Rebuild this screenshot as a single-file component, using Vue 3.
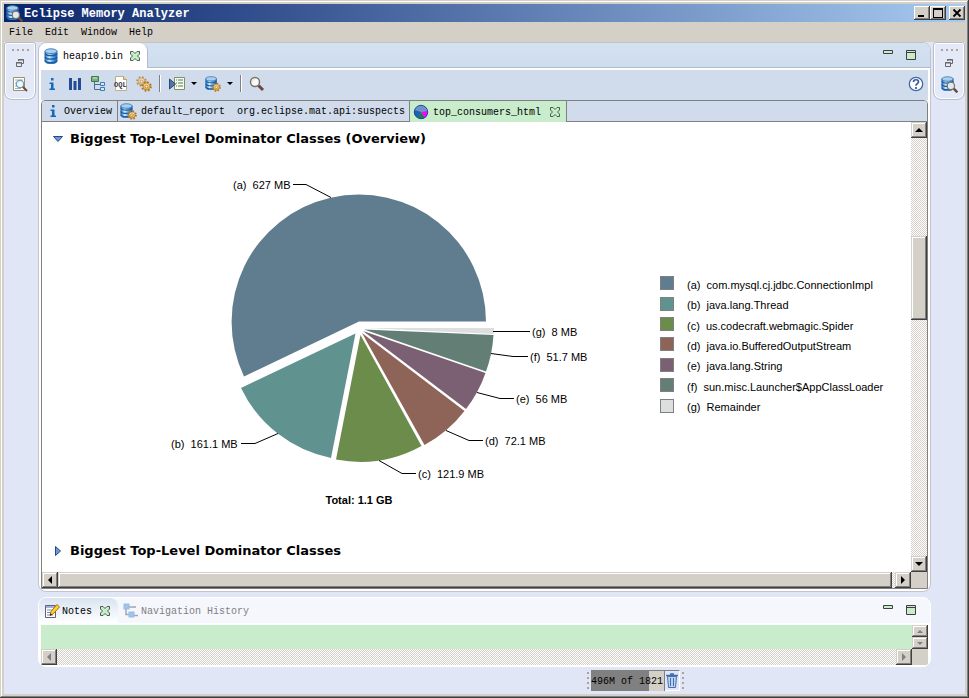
<script setup>
import { ref } from 'vue'

const menus = ['File', 'Edit', 'Window', 'Help']
const notes = ref('')
const heap = { used: 496, total: 1821, fill: 79 }

const slices = [
  { key: 'a', name: 'com.mysql.cj.jdbc.ConnectionImpl', size: '627 MB', color: '#607d8f', x: 233, y: 189, path: 'M359 321.5L244 376.5A127.2 127.2 0 1 1 486 321.5Z', line: '331,197.5 306,184.5 293,184.5' },
  { key: 'b', name: 'java.lang.Thread', size: '161.1 MB', color: '#609290', x: 171, y: 448, path: 'M355.5 333.5L241 388A127.5 127.5 0 0 0 331 458Z', line: '278,433.5 255,443.5 241,443.5' },
  { key: 'c', name: 'us.codecraft.webmagic.Spider', size: '121.9 MB', color: '#6c8c4b', x: 418, y: 478, path: 'M360.5 335L336 459.5A127.5 127.5 0 0 0 421.5 446Z', line: '379,460.5 402,473.5 416,473.5' },
  { key: 'd', name: 'java.io.BufferedOutputStream', size: '72.1 MB', color: '#8d6457', x: 485, y: 445, path: 'M362 333L424.5 445A127.5 127.5 0 0 0 464.5 411Z', line: '446,430.5 469,440.5 483,440.5' },
  { key: 'e', name: 'java.lang.String', size: '56 MB', color: '#7b5f73', x: 516, y: 403, path: 'M363 331L466 409A127.5 127.5 0 0 0 485.5 373Z', line: '477,392.5 500,398.5 514,398.5' },
  { key: 'f', name: 'sun.misc.Launcher$AppClassLoader', size: '51.7 MB', color: '#637f75', x: 530, y: 361, path: 'M364 329.5L486 371.5A127.5 127.5 0 0 0 493.5 335Z', line: '491,353.5 513,356.5 528,356.5' },
  { key: 'g', name: 'Remainder', size: '8 MB', color: '#dddfdf', x: 532, y: 336, path: 'M366 328L494 328A127.5 127.5 0 0 1 493.5 334Z', line: '493,331.5 530,331.5' },
]
</script>

<template>
  <div class="window">
    <svg class="sprite" aria-hidden="true">
      <defs>
        <linearGradient id="cyl" x1="0" x2="1"><stop offset="0" stop-color="#2b6cb5" /><stop offset=".35" stop-color="#d4f0fd" /><stop offset=".6" stop-color="#62b4ea" /><stop offset="1" stop-color="#1c5ba8" /></linearGradient>
        <linearGradient id="gold" x1="0" y1="0" x2="0" y2="1"><stop offset="0" stop-color="#ffe9b0" /><stop offset="1" stop-color="#e0a840" /></linearGradient>
        <symbol id="db" viewBox="0 0 16 16">
          <path d="M2 3v10c0 3.600 12 3.600 12 0V3z" fill="url(#cyl)" stroke="#2f6fb5" />
          <path d="M2 5.500c1 2.800 11 2.800 12 0M2 9c1 2.800 11 2.800 12 0M2 12.500c1 2.800 11 2.800 12 0" fill="none" stroke="#1b5aa6" stroke-width="1.300" />
          <ellipse cx="8" cy="3.200" rx="6" ry="2.400" fill="#a9cfec" stroke="#4a83bd" />
        </symbol>
        <symbol id="gear" viewBox="0 0 16 16">
          <circle cx="8" cy="8" r="6.200" fill="none" stroke="#b0741c" stroke-width="3" stroke-dasharray="2.500 2.370" />
          <circle cx="8" cy="8" r="5" fill="url(#gold)" stroke="#b0741c" />
          <circle cx="8" cy="8" r="2" fill="#fff5dc" stroke="#a86b16" />
        </symbol>
        <symbol id="dbgear" viewBox="0 0 17 17">
          <use href="#db" x="-1" y="0" width="15" height="15" /><use href="#gear" x="7" y="7" width="10" height="10" />
        </symbol>
        <symbol id="mag" viewBox="0 0 16 16">
          <path d="M9.500 9.500L14 14" stroke="#70483a" stroke-width="3" />
          <circle cx="6" cy="6" r="4.500" fill="#fff" fill-opacity=".85" stroke="#75736a" stroke-width="1.500" />
          <path d="M3.500 6C3.500 4.500 4.500 3.500 6 3.500" stroke="#f4dcab" fill="none" />
        </symbol>
        <symbol id="dbmag" viewBox="0 0 17 17">
          <use href="#db" x="-1" y="0" width="15" height="15" /><use href="#mag" x="5" y="5" width="13" height="13" />
        </symbol>
        <symbol id="info" viewBox="0 0 16 16">
          <path d="M7 2h2.500v2.500H7zM5.500 6.500h4v6H11V14H5.500v-1.500H7V8H5.500z" fill="#1269bd" />
        </symbol>
        <symbol id="close" viewBox="0 0 12 12">
          <path d="M1.500 1.500h2.500L6 3.500l2-2h2.500V4l-2 2 2 2v2.500H8l-2-2-2 2H1.500V8l2-2-2-2z" fill="#c8eccc" stroke="#46604a" />
        </symbol>
        <symbol id="restore" viewBox="0 0 10 10"><path d="M3.500 3V1.500h5v4H7M3 2h6M1.500 4.500h5v4h-5zM1 5h6" fill="none" stroke="#686868" /></symbol>
        <symbol id="minimize" viewBox="0 0 12 12"><path d="M1.500 1.500h9v3h-9z" fill="#c8eccc" stroke="#404040" /></symbol>
        <symbol id="maximize" viewBox="0 0 12 12"><path d="M1.500 1.500h9v9h-9zM1 3.500h10" fill="#c8eccc" stroke="#404040" /></symbol>
      </defs>
    </svg>

    <header class="title">
      <svg class="i17"><use href="#dbmag" /></svg>
      <h1>Eclipse Memory Analyzer</h1>
      <div class="winbtns">
        <button class="raised" aria-label="Minimize window"><svg viewBox="0 0 12 10"><path d="M2 7h6v2H2z" /></svg></button>
        <button class="raised" aria-label="Maximize window"><svg viewBox="0 0 12 10"><path d="M1 0h10v10H1zM2 2v7h8V2z" fill-rule="evenodd" /></svg></button>
        <button class="raised closewin" aria-label="Close window"><svg viewBox="0 0 12 10"><path d="M2.500 1.500l7 7M9.500 1.500l-7 7" stroke="#000" stroke-width="1.800" /></svg></button>
      </div>
    </header>

    <nav class="menu"><button v-for="m in menus" :key="m">{{ m }}</button></nav>

    <div class="body">
      <aside class="trim left">
        <div class="trimbox">
          <span class="grip"></span>
          <button aria-label="Restore"><svg class="i10"><use href="#restore" /></svg></button>
          <button aria-label="Inspector"><svg class="i16" viewBox="0 0 16 16"><path d="M1.500 1.500h11v13h-11z" fill="#fff" stroke="#a38f66" /><path d="M3 4h8M3 7h8M3 10h8M3 12.500h6" stroke="#8db7d1" /><path d="M10 10l5 5" stroke="#70483a" stroke-width="2" /><circle cx="8" cy="8" r="3.700" fill="#eef8fc" stroke="#739bab" stroke-width="1.200" /></svg></button>
        </div>
      </aside>

      <main class="center">
        <section class="editor">
          <div class="strip">
            <button class="filetab"><svg class="i16"><use href="#db" /></svg><span>heap10.bin</span><svg class="i12"><use href="#close" /></svg></button>
            <div class="viewbtns">
              <button aria-label="Minimize editor"><svg class="i12"><use href="#minimize" /></svg></button>
              <button aria-label="Maximize editor"><svg class="i12"><use href="#maximize" /></svg></button>
            </div>
          </div>

          <div class="toolbar">
            <button aria-label="Overview"><svg class="i16"><use href="#info" /></svg></button>
            <button aria-label="Histogram"><svg class="i16" viewBox="0 0 16 16"><path d="M2 2h3v12H2zM6.500 5h3v9h-3zM11 2h3v12h-3z" fill="#234c96" /></svg></button>
            <button aria-label="Dominator tree"><svg class="i16" viewBox="0 0 16 16"><path d="M4.500 6v7.500H10M4.500 8.500H10" fill="none" stroke="#496e8e" /><path d="M1.500.5h7v5h-7z" fill="#78ae79" stroke="#3e7a50" /><path d="M3 2h4" stroke="#d6f1cb" /><path d="M10.500 6.500h4v3h-4zM10.500 11.500h4v3h-4z" fill="#d4eafa" stroke="#397cb6" /></svg></button>
            <button aria-label="Query"><svg class="i16" viewBox="0 0 16 16"><path d="M2.500.5h8l3 3v11h-11z" fill="#fff" stroke="#c0ae88" /><path d="M10.500.5v3h3" fill="#edd6a0" stroke="#bd9b58" /><text x="1" y="11" class="oql">OQL</text></svg></button>
            <button aria-label="Thread overview"><svg class="i16"><use href="#gear" x="0" y="0" width="11" height="11" opacity=".7" /><use href="#gear" x="5" y="5" width="11" height="11" /></svg></button>
            <span class="sep"></span>
            <button class="drop" aria-label="Run reports"><svg class="i18" viewBox="0 0 18 16"><path d="M6.500 1.500h10v12h-10z" fill="#f7fbed" stroke="#8b8b68" /><path d="M8 4h1M10 4h5M8 7h1M10 7h5M8 10h1M10 10h5" stroke="#438557" /><path d="M1.500 3l6 5-6 5z" fill="#5475a8" stroke="#284978" /></svg><i></i></button>
            <button class="drop" aria-label="Query browser"><svg class="i18"><use href="#dbgear" /></svg><i></i></button>
            <span class="sep"></span>
            <button aria-label="Find"><svg class="i16"><use href="#mag" /></svg></button>
            <button class="help" aria-label="Help"><svg class="i16" viewBox="0 0 16 16"><circle cx="8" cy="8" r="6.700" fill="#fff" stroke="#4268a8" stroke-width="1.300" /><path d="M5.500 6c0-3 5-3 5 0 0 1.500-2.500 1.700-2.500 3.700M8 11v2" fill="none" stroke="#3358a0" stroke-width="1.700" /></svg></button>
          </div>

          <div class="pages">
            <div class="pagetabs">
              <button class="t1"><svg class="i16"><use href="#info" /></svg><span>Overview</span></button>
              <button class="t2"><svg class="i17"><use href="#dbgear" /></svg><span>default_report&nbsp; org.eclipse.mat.api:suspects</span></button>
              <button class="t3"><svg class="i16" viewBox="0 0 16 16"><circle cx="8" cy="8" r="6.500" fill="#6f92c8" /><path d="M8 8L1.500 6A7 7 0 0 0 5 14z" fill="#1663b4" /><path d="M8 8l-3 6a7 7 0 0 0 7 0z" fill="#14804c" /><path d="M8 8l4 6a7 7 0 0 0 2.500-7z" fill="#f0f" /><circle cx="8" cy="8" r="6.700" fill="none" stroke="#1d4b95" /></svg><span>top_consumers_html</span><svg class="i12"><use href="#close" /></svg></button>
            </div>

            <div class="viewport">
              <article class="report">
                <h2><button><svg class="i10" viewBox="0 0 10 10"><path d="M.5 2.500h9L5 7.500z" fill="#7793d0" stroke="#24468c" /></svg>Biggest Top-Level Dominator Classes (Overview)</button></h2>
                <div class="chart">
                  <svg class="pie" viewBox="68 148 552 380" role="img" aria-label="Biggest Top-Level Dominator Classes">
                    <g v-for="s in slices" :key="s.key">
                      <path :d="s.path" :fill="s.color" />
                      <polyline :points="s.line" fill="none" stroke="#000" />
                      <text :x="s.x" :y="s.y">({{ s.key }})&nbsp; {{ s.size }}</text>
                    </g>
                    <text class="total" x="359" y="504" text-anchor="middle">Total: 1.1 GB</text>
                  </svg>
                  <ul class="legend">
                    <li v-for="s in slices" :key="s.key"><i :style="{ background: s.color }"></i><span>({{ s.key }})&nbsp; {{ s.name }}</span></li>
                  </ul>
                </div>
                <h2><button><svg class="i10" viewBox="0 0 10 10"><path d="M2.500.5v9L7.500 5z" fill="#7793d0" stroke="#24468c" /></svg>Biggest Top-Level Dominator Classes</button></h2>
              </article>
              <div class="vbar">
                <button class="raised" aria-label="Scroll up"><i class="up"></i></button>
                <div class="vtrack"><div class="raised vthumb"></div></div>
                <button class="raised" aria-label="Scroll down"><i class="down"></i></button>
              </div>
              <div class="hbar">
                <button class="raised" aria-label="Scroll left"><i class="lt"></i></button>
                <div class="htrack"><div class="raised hthumb"></div></div>
                <button class="raised" aria-label="Scroll right"><i class="rt"></i></button>
              </div>
              <div class="corner"></div>
            </div>
          </div>
        </section>

        <section class="notes">
          <div class="notehead">
            <button class="notetab"><svg class="i16" viewBox="0 0 16 16"><path d="M1.500 2.500h10v12h-10z" fill="#fff" stroke="#6c5a78" /><path d="M2 4h9" stroke="#9db4da" stroke-width="2" /><path d="M3 7h6M3 9.500h5M3 12h6" stroke="#6c8cc0" /><path d="M6 12.500l1-4 6-7 2.500 2.500-6.500 7z" fill="#ffd42a" stroke="#a96d13" /><path d="M6 12.500l.5-2 1.500 1.200z" /></svg><span>Notes</span><svg class="i12"><use href="#close" /></svg></button>
            <button class="navtab"><svg class="i16" viewBox="0 0 16 16"><path d="M3 6v5.500h3M6 4h7M11 12.500h4" fill="none" stroke="#a0a8b4" stroke-width="1.500" /><path d="M1.500 1.500h4v4h-4zM6.500 9.500h4v4h-4z" fill="#a4cbf0" stroke="#9dbde4" stroke-width="2" /></svg><span>Navigation History</span></button>
            <div class="viewbtns">
              <button aria-label="Minimize notes"><svg class="i12"><use href="#minimize" /></svg></button>
              <button aria-label="Maximize notes"><svg class="i12"><use href="#maximize" /></svg></button>
            </div>
          </div>
          <div class="notebody">
            <textarea v-model="notes" aria-label="Notes"></textarea>
            <div class="vbar short">
              <button class="raised" aria-label="Scroll notes up"><i class="up"></i></button>
              <button class="raised" aria-label="Scroll notes down"><i class="down"></i></button>
            </div>
            <div class="hbar off">
              <button class="raised" aria-label="Scroll notes left"><i class="lt"></i></button>
              <div class="htrack"></div>
              <button class="raised" aria-label="Scroll notes right"><i class="rt"></i></button>
            </div>
            <div class="corner"></div>
          </div>
        </section>
      </main>

      <aside class="trim right">
        <div class="trimbox">
          <span class="grip"></span>
          <button aria-label="Restore"><svg class="i10"><use href="#restore" /></svg></button>
          <button aria-label="Heap search"><svg class="i17"><use href="#dbmag" /></svg></button>
        </div>
      </aside>
    </div>

    <footer class="status">
      <span class="vgrip"></span>
      <div class="heap"><div class="fill" :style="{ width: heap.fill + '%' }"></div><span>{{ heap.used }}M of {{ heap.total }}</span></div>
      <button class="gc" aria-label="Run garbage collector"><svg viewBox="0 0 14 17"><path d="M2.500 4.500l1 11h7l1-11z" fill="#b8d4f2" stroke="#466fb0" /><path d="M5.500 6v8M8.500 6v8" stroke="#466fb0" /><path d="M1 3.500h12M5 2h4" stroke="#466fb0" stroke-width="1.500" /></svg></button>
      <span class="vgrip"></span>
    </footer>
  </div>
</template>

<style>
body { margin: 0; }
</style>

<style scoped>
* { box-sizing: border-box; }
button { border: 0; background: none; padding: 0; margin: 0; font: inherit; color: inherit; display: flex; align-items: center; }
svg { display: block; flex: none; }
.sprite { position: absolute; width: 0; height: 0; }
.i10 { width: 10px; height: 10px; }
.i12 { width: 12px; height: 12px; }
.i16 { width: 16px; height: 16px; }
.i17 { width: 17px; height: 17px; }
.i18 { width: 18px; height: 16px; }
.window { height: 100vh; padding: 4px; display: flex; flex-direction: column; background: #d4d0c8; box-shadow: inset -1px -1px #404040, inset 1px 1px #d4d0c8, inset -2px -2px #808080, inset 2px 2px #fff; font: 10px/12px "Liberation Mono", monospace; color: #000; overflow: hidden; }
.title { height: 18px; flex: none; display: flex; align-items: center; gap: 1px; padding-left: 2px; background: linear-gradient(90deg, #0a246a, #a6caf0); color: #fff; }
h1 { margin: 0; padding-top: 1px; font-size: 12px; line-height: 16px; font-weight: bold; }
.winbtns { margin-left: auto; display: flex; }
.raised { background: #d4d0c8; box-shadow: inset -1px -1px #404040, inset 1px 1px #d4d0c8, inset -2px -2px #808080, inset 2px 2px #fff; justify-content: center; }
.winbtns .raised { width: 16px; height: 14px; box-shadow: inset -1px -1px #404040, inset 1px 1px #fff, inset -2px -2px #808080; }
.winbtns svg { width: 12px; height: 10px; }
.winbtns .closewin { margin-left: 3px; }
.menu { height: 20px; flex: none; display: flex; gap: 12px; padding: 2px 0 0 5px; }
.body { flex: 1; min-height: 0; display: flex; background: #e0e6f6; }
.trim { width: 34px; flex: none; }
.right { padding-left: 2px; }
.trimbox { width: 32px; height: 58px; border: 1px solid #b8bccc; border-radius: 3px 3px 8px 8px; box-shadow: inset 0 0 0 1px #fff; background: #e4e9f7; display: flex; flex-direction: column; align-items: center; padding-top: 6px; }
.grip { width: 17px; height: 2px; background: repeating-linear-gradient(90deg, #aaa59a 0 2px, transparent 2px 5px); }
.trimbox .i10 { margin: 7px 0 8px; }
.center { flex: 1; min-width: 0; display: flex; flex-direction: column; gap: 5px; }
.editor { flex: 1; min-height: 0; display: flex; flex-direction: column; border: 1px solid #c4c4c8; border-radius: 8px; background: #fff; overflow: hidden; }
.strip { height: 25px; flex: none; display: flex; justify-content: space-between; background: linear-gradient(#d5e1f0, #cddded); border-bottom: 1px solid #b4bccb; }
.filetab { height: 25px; width: 109px; padding-left: 4px; background: #fff; border-right: 1px solid #b4bccb; border-radius: 8px 8px 0 0; gap: 4px; }
.filetab span, .pagetabs span, .notehead span { padding-top: 2px; }
.filetab .i12 { margin-left: 2px; }
.viewbtns { display: flex; gap: 11px; padding: 6px 13px 0 0; align-items: flex-start; margin-left: auto; }
.toolbar { height: 30px; flex: none; margin: 2px 2px 0; display: flex; align-items: center; gap: 7px; padding: 0 4px 3px 3px; background: #d0dcec; }
.sep { width: 2px; height: 17px; background: linear-gradient(90deg, #808080 50%, #fff 50%); }
.drop { gap: 5px; }
.drop i { border: 3px solid transparent; border-top-color: #000; border-bottom: 0; }
.help { margin-left: auto; }
.oql { font: bold 7px "Liberation Mono", monospace; fill: #334; }
.pages { flex: 1; min-height: 0; margin: 0 2px 2px; border: 1px solid #808080; border-radius: 4px 4px 0 0; display: flex; flex-direction: column; overflow: hidden; }
.pagetabs { height: 21px; flex: none; display: flex; background: #d0dcec; border-bottom: 1px solid #808080; }
.pagetabs button { height: 20px; border-right: 1px solid #808080; white-space: nowrap; }
.t1 { width: 76px; padding-left: 3px; gap: 3px; }
.t2 { width: 292px; padding-left: 2px; gap: 4px; }
.pagetabs .t3 { width: 157px; height: 21px; padding-left: 3px; gap: 4px; background: #c8eccc; }
.t3 .i12 { margin-left: 4px; }
.viewport { flex: 1; min-height: 0; display: grid; grid-template: minmax(0, 1fr) 16px / minmax(0, 1fr) 16px; }
.report { padding: 8px 0 0 11px; overflow: hidden; font-family: "Liberation Sans", sans-serif; font-size: 11px; }
h2 { margin: 0; font: bold 13px/18px "DejaVu Sans", sans-serif; }
h2 button { gap: 7px; height: 18px; white-space: nowrap; }
.chart { display: flex; justify-content: center; gap: 40px; margin: 0 0 14px -11px; }
.pie { width: 552px; height: 380px; }
.total { font-weight: bold; }
.legend { list-style: none; margin: 125px 0 0; padding: 0; width: 225px; height: 143px; display: grid; grid-template-rows: repeat(7, 1fr); }
.legend li { display: flex; align-items: center; gap: 13px; white-space: nowrap; }
.legend i { width: 14px; height: 14px; border: 1px solid #808080; }
.legend span { padding-top: 3px; }
.vbar { display: flex; flex-direction: column; }
.vbar .raised, .hbar .raised { flex: none; width: 16px; height: 16px; }
.vtrack, .htrack { flex: 1; background: repeating-conic-gradient(#d4d0c8 0 25%, #fff 0 50%) 0 0 / 2px 2px; }
.vtrack { display: grid; grid-template-rows: 98fr 84fr 237fr; }
.vtrack .vthumb { grid-row: 2; height: auto; }
.hbar { display: flex; }
.htrack { display: flex; padding-right: 3px; }
.hbar .hthumb { flex: 1; width: auto; }
.corner { background: #d4d0c8; }
.up, .down { border: 4px solid transparent; }
.up { border-bottom-color: #000; border-top: 0; }
.down { border-top-color: #000; border-bottom: 0; }
.lt, .rt { border: 4px solid transparent; }
.lt { border-right-color: #000; border-left: 0; }
.rt { border-left-color: #000; border-right: 0; }
.notes { flex: none; border: 1px solid #fff; border-radius: 8px; background: #fff; overflow: hidden; }
.notehead { height: 25px; display: flex; background: #f5f7fd; }
.notetab { width: 79px; height: 25px; padding-left: 5px; gap: 2px; border-radius: 0 8px 0 0; background: linear-gradient(#d8e4f0, #fff); }
.notetab .i12 { margin-left: 5px; }
.navtab { padding-left: 5px; gap: 2px; color: #808080; }
.notebody { margin: 2px 2px 1px; display: grid; grid-template: 24px 16px / minmax(0, 1fr) 16px; }
textarea { width: 100%; height: 100%; border: 0; padding: 2px; margin: 0; resize: none; background: #c8eccc; font: inherit; outline: 0; overflow: hidden; display: block; }
.short .raised { height: 12px; }
.short .up { border-width: 0 3px 3px; border-bottom-color: #808080; }
.short .down { border-width: 3px 3px 0; border-top-color: #808080; }
.off .lt { border-right-color: #808080; }
.off .rt { border-left-color: #808080; }
.status { height: 27px; flex: none; background: #e0e6f6; display: flex; align-items: center; justify-content: center; padding-left: 302px; gap: 2px; }
.vgrip { width: 2px; height: 17px; background: repeating-linear-gradient(#aaa59a 0 2px, transparent 2px 5px); }
.heap { position: relative; width: 74px; height: 21px; background: #d4d0c8; border-top: 1px solid #808080; border-right: 1px solid #808080; }
.fill { height: 100%; background: #808080; }
.heap span { position: absolute; left: 0; top: 5px; white-space: nowrap; }
.gc { width: 15px; height: 21px; margin-left: -2px; border-top: 1px solid #808080; border-right: 1px solid #fff; border-bottom: 1px solid #fff; justify-content: center; }
.gc svg { width: 14px; height: 17px; }
</style>
